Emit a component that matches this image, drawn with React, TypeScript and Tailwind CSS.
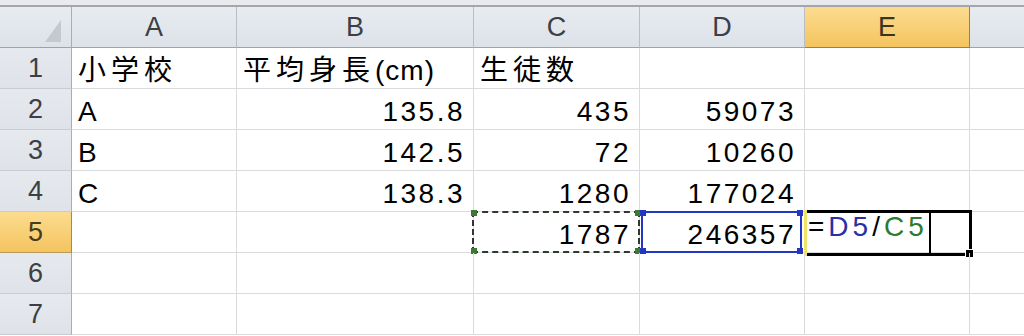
import React from 'react';

const cols = ['A', 'B', 'C', 'D', 'E'];
const widths = ['w-[165px]', 'w-[237px]', 'w-[166px]', 'w-[165px]', 'w-[165px]'];

type Cell = { v: string; align?: 'left' | 'right'; cjk?: boolean };

const rows: Cell[][] = [
  [{ v: '小学校', cjk: true }, { v: '平均身長(cm)', cjk: true }, { v: '生徒数', cjk: true }, { v: '' }, { v: '' }],
  [{ v: 'A' }, { v: '135.8', align: 'right' }, { v: '435', align: 'right' }, { v: '59073', align: 'right' }, { v: '' }],
  [{ v: 'B' }, { v: '142.5', align: 'right' }, { v: '72', align: 'right' }, { v: '10260', align: 'right' }, { v: '' }],
  [{ v: 'C' }, { v: '138.3', align: 'right' }, { v: '1280', align: 'right' }, { v: '177024', align: 'right' }, { v: '' }],
  [{ v: '' }, { v: '' }, { v: '1787', align: 'right' }, { v: '246357', align: 'right' }, { v: '' }],
  [{ v: '' }, { v: '' }, { v: '' }, { v: '' }, { v: '' }],
  [{ v: '' }, { v: '' }, { v: '' }, { v: '' }, { v: '' }],
];

const Handle: React.FC<{ pos: string; color: string }> = ({ pos, color }) => (
  <div className={`absolute w-[6px] h-[6px] ${pos} ${color}`} />
);

const CellText: React.FC<{ cell: Cell }> = ({ cell }) => {
  if (!cell.v) return null;
  if (cell.cjk) {
    const m = cell.v.match(/^([^(]*)(\(.*\))?$/);
    return (
      <span>
        <span className="tracking-[5px]">{m?.[1]}</span>
        {m?.[2] && <span className="tracking-[1px]">{m[2]}</span>}
      </span>
    );
  }
  return <span className="tracking-[2.5px]">{cell.v}</span>;
};

export default function App() {
  return (
    <div className="w-[1024px] h-[336px] overflow-hidden bg-white font-['Liberation_Sans','Noto_Sans_CJK_JP',sans-serif] text-black">
      {/* top strip */}
      <div className="h-[7px] bg-[#e9eaee] border-b-2 border-[#a3a6ab]" />

      {/* column header */}
      <div className="flex h-[41px]">
        <div className="w-[72px] shrink-0 bg-gradient-to-b from-[#e8ecf1] to-[#dde2e8] border-r border-[#a9aeb5] border-b border-b-[#9ea3aa] flex items-end justify-end pr-[10px] pb-[5px]">
          <svg width="16" height="22" viewBox="0 0 16 22">
            <polygon points="16,0 16,22 0,22" fill="#c5c9cf" />
          </svg>
        </div>
        {cols.map((c, i) => (
          <div
            key={c}
            className={`${widths[i]} shrink-0 flex items-center justify-center text-[27px] leading-none border-r border-b ${
              c === 'E'
                ? 'bg-gradient-to-b from-[#fbdc8e] to-[#f4c45e] border-r-[#8d8270] border-b-[#8d8270] text-[#3b3324]'
                : 'bg-gradient-to-b from-[#e8ecf1] to-[#dde2e8] border-r-[#b9bec5] border-b-[#9ea3aa] text-[#3c3f44]'
            }`}
          >
            {c}
          </div>
        ))}
        <div className="flex-1 bg-gradient-to-b from-[#e8ecf1] to-[#dde2e8] border-b border-[#9ea3aa]" />
      </div>

      {/* rows */}
      {rows.map((r, ri) => {
        const n = ri + 1;
        const sel = n === 5;
        return (
          <div key={n} className="flex h-[41px]">
            <div
              className={`w-[72px] shrink-0 flex items-center justify-center text-[27px] leading-none border-r border-b ${
                sel
                  ? 'bg-gradient-to-b from-[#fbdc8e] to-[#f4c45e] border-r-[#a08a58] border-b-[#b89a58] text-[#4a3a1c]'
                  : 'bg-gradient-to-b from-[#e6eaef] to-[#dfe3e9] border-r-[#a9aeb5] border-b-[#c8cdd3] text-[#3c3f44]'
              }`}
            >
              {n}
            </div>
            {r.map((cell, ci) => (
              <div
                key={ci}
                className={`${widths[ci]} shrink-0 relative flex items-end text-[28px] leading-[28px] pb-[3px] border-r border-b border-[#dadbdd] ${
                  cell.align === 'right' ? 'justify-end pr-[8px]' : 'justify-start pl-[6px]'
                }`}
              >
                <CellText cell={cell} />

                {sel && ci === 2 && (
                  <div className="absolute -left-[2px] -top-[1px] w-[168px] h-[42px] border-2 border-dashed border-[#2d3a2c]">
                    <Handle pos="-left-[3px] -top-[3px]" color="bg-[#3c7a34]" />
                    <Handle pos="-right-[3px] -top-[3px]" color="bg-[#3c7a34]" />
                    <Handle pos="-left-[3px] -bottom-[3px]" color="bg-[#3c7a34]" />
                    <Handle pos="-right-[3px] -bottom-[3px]" color="bg-[#3c7a34]" />
                  </div>
                )}
                {sel && ci === 3 && (
                  <div className="absolute left-[1px] -top-[1px] w-[161px] h-[42px] border-2 border-[#2437c4]">
                    <Handle pos="-left-[3px] -top-[3px]" color="bg-[#2437c4]" />
                    <Handle pos="-right-[3px] -top-[3px]" color="bg-[#2437c4]" />
                    <Handle pos="-left-[3px] -bottom-[3px]" color="bg-[#2437c4]" />
                    <Handle pos="-right-[3px] -bottom-[3px]" color="bg-[#2437c4]" />
                  </div>
                )}
                {sel && ci === 4 && (
                  <>
                    <div className="absolute -left-[1px] -top-[2px] w-[168px] h-[46px] border-[3px] border-black" />
                    <div className="absolute -left-[1px] -top-[2px] w-[3px] h-[46px] bg-[#efe36a]" />
                    <div className="absolute -right-[5px] -bottom-[6px] w-[9px] h-[9px] bg-black border border-white" />
                    <div className="absolute left-[3px] bottom-[3px] text-[28px] leading-[28px] tracking-[4px] flex">
                      <span>=</span>
                      <span className="text-[#2b2fa6]">D5</span>
                      <span>/</span>
                      <span className="text-[#2f7a2e]">C5</span>
                      <span className="ml-[1px] w-[2px] h-[40px] -mb-[4px] bg-black" />
                    </div>
                  </>
                )}
              </div>
            ))}
            <div className="flex-1 border-b border-[#dadbdd]" />
          </div>
        );
      })}
    </div>
  );
}
